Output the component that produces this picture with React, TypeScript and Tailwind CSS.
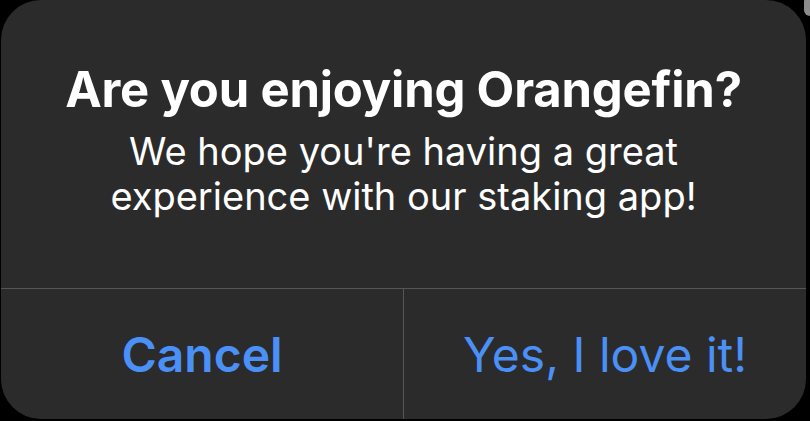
import React from 'react';

export default function App() {
  return (
    <div
      className="relative w-[810px] h-[421px] bg-black overflow-hidden"
      style={{ fontFamily: 'Inter, "Liberation Sans", sans-serif' }}
    >
      <div className="ml-px w-[805px] h-[419px] rounded-[40px] bg-[#2b2b2b] flex flex-col overflow-hidden">
        <div className="h-[288px] flex flex-col items-center pt-[61px] text-center text-white">
          <h1 className="text-[49px] leading-[58px] font-bold tracking-[-0.2px]">
            Are you enjoying Orangefin?
          </h1>
          <p className="mt-[10px] text-[38px] leading-[45px] font-normal">
            We hope you're having a great
            <br />
            experience with our staking app!
          </p>
        </div>
        <div className="h-px bg-[#565656]" />
        <div className="flex flex-1">
          <button className="flex-1 flex items-center justify-center pt-[2px] text-[48px] font-semibold text-[#4a90f6]">
            Cancel
          </button>
          <div className="w-px bg-[#565656]" />
          <button className="flex-1 flex items-center justify-center pt-[2px] text-[48px] font-normal text-[#4a90f6]">
            Yes, I love it!
          </button>
        </div>
      </div>
      <div className="absolute right-[-6px] top-[-4px] w-[12px] h-[20px] rounded-full bg-[#8c8c8c]" />
    </div>
  );
}
